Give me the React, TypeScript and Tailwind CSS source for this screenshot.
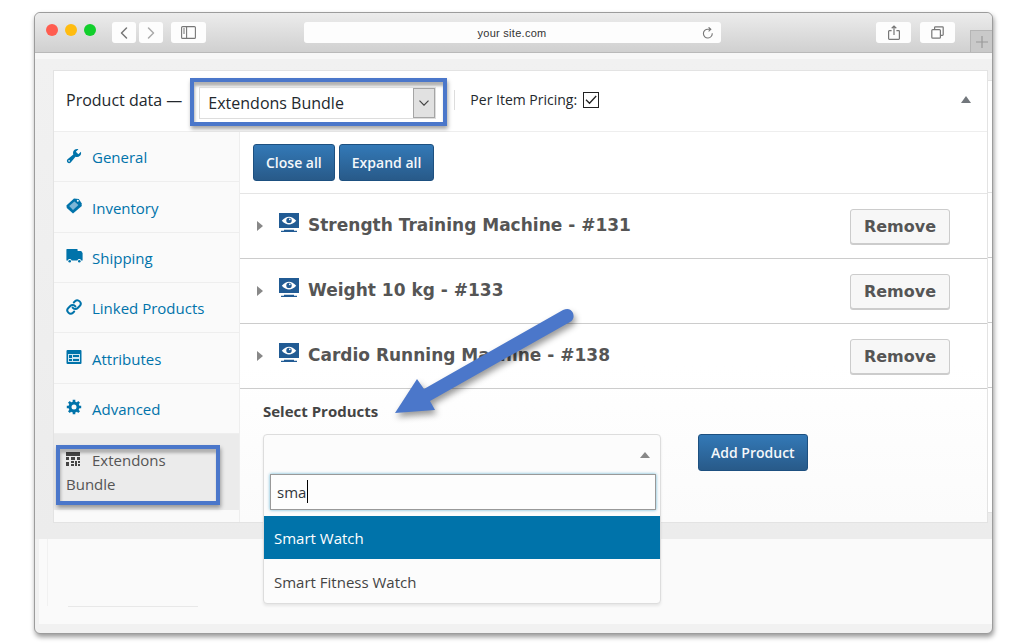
import type { ReactNode } from 'react';
import { ChevronLeft, ChevronRight, Link } from 'lucide-react';

const WrenchIcon = () => (
  <svg viewBox="1 1 18 18" className="w-4 h-4" fill="currentColor">
    <path d="M16.68 9.77c-1.34 1.34-3.3 1.67-4.95.99l-5.41 6.52c-.99.99-2.59.99-3.58 0s-.99-2.59 0-3.57l6.52-5.42c-.68-1.65-.35-3.61.99-4.95 1.28-1.28 3.12-1.62 4.72-1.06l-2.89 2.89 2.82 2.82 2.86-2.87c.53 1.58.18 3.39-1.08 4.65z" />
    <circle cx="4.500" cy="15.500" r=".9" fill="#fafafa" />
  </svg>
);

const TagIcon = () => (
  <svg viewBox="0 0 16 16" className="w-4 h-4" fill="currentColor">
    <path d="M.4 7.600 8 .6l4.800.4 2.800 4.200L15.800 8 7 15.600.8 10z" />
    <path d="M3.200 8 8.400 3.400l4 3.600-5.400 5z" fill="#7db6d6" />
    <circle cx="11.800" cy="2.800" r="1" fill="#fafafa" />
  </svg>
);

const TruckIcon = () => (
  <svg viewBox="0 0 17 14" className="w-[17px] h-[14px]" fill="currentColor">
    <path d="M1 0h10q.6 0 .6.6V2h3.600l1.400 2v7.400h-1.400a2 2 0 0 0-3.800 0H5.600a2 2 0 0 0-3.800 0H.4V.6Q.4 0 1 0z" />
    <circle cx="3.700" cy="12.200" r="1.300" />
    <circle cx="13.300" cy="12.200" r="1.300" />
  </svg>
);

const CardIcon = () => (
  <svg viewBox="0 0 16 14" className="w-4 h-[14px]" fill="currentColor">
    <rect x=".5" y="0" width="15" height="14" rx="1" />
    <path d="M2 4h12v8H2z" fill="#cfe5f1" />
    <path d="M3 5h3v3H3zM7 5h6v2H7zM3 9h3v2H3zM7 9h6v2H7z" />
  </svg>
);

const GearIcon = () => (
  <svg viewBox="0 0 16 16" className="w-4 h-4" fill="none" stroke="currentColor">
    <circle cx="8" cy="8" r="4" strokeWidth="3" />
    <path d="M8 .8v2.400M8 12.800v2.400M.8 8h2.400M12.800 8h2.400M2.900 2.900l1.700 1.700M11.400 11.400l1.700 1.700M13.100 2.900l-1.700 1.700M4.600 11.400l-1.700 1.700" strokeWidth="2.600" />
  </svg>
);

const LayoutIcon = () => (
  <svg viewBox="0 0 14 14" className="w-[14px] h-[14px]" fill="currentColor">
    <path d="M0 0h14v4H0zM0 5h3v3H0zM5 5h4v3H5zM11 5h3v3h-3zM0 10h3v4H0zM5 9h3v2H5zM5 12h3v2H5zM9 9h2v5H9zM12 9h2v2h-2zM12 12h2v2h-2z" />
  </svg>
);

const ScreenIcon = () => (
  <svg viewBox="0 0 20 19" className="w-5 h-[19px] text-[#215b94]" fill="currentColor">
    <path d="M0 0h20v15H0z" />
    <path d="M5 16.800h10v.9h3v1.300H2v-1.300h3z" />
    <path d="M2.800 7.800Q10-.4 17.200 7.800 10 15.400 2.800 7.800z" fill="#fff" />
    <circle cx="10" cy="7.400" r="2.700" />
    <circle cx="10.800" cy="6.400" r=".8" fill="#fff" />
  </svg>
);

const tabs = [
  { name: 'General', icon: <WrenchIcon /> },
  { name: 'Inventory', icon: <TagIcon /> },
  { name: 'Shipping', icon: <TruckIcon /> },
  { name: 'Linked Products', icon: <Link className="w-4 h-4" strokeWidth={3} /> },
  { name: 'Attributes', icon: <CardIcon /> },
  { name: 'Advanced', icon: <GearIcon /> },
];

const products = ['Strength Training Machine - #131', 'Weight 10 kg - #133', 'Cardio Running Machine - #138'];

function ChromeButton({ label, className, children }: { label: string; className: string; children: ReactNode }) {
  return (
    <button aria-label={label} className={`h-[21px] rounded-[3px] bg-[#fdfdfd] flex items-center justify-center text-[#777] ${className}`}>
      {children}
    </button>
  );
}

function BlueButton({ children }: { children: ReactNode }) {
  return (
    <button className="h-[37px] px-3 rounded-[3px] border border-[#1d5080] bg-linear-to-b from-[#3379b7] to-[#285a89] text-sm font-semibold text-[#f4f7fa]">
      {children}
    </button>
  );
}

function TitleBar() {
  return (
    <div className="h-10 flex border-b border-[#b9b9b9] bg-linear-to-b from-[#ececec] to-[#d0d0d0] rounded-t-md">
      <div className="flex-1 flex pt-[9px] pl-[11px]">
        <div className="flex gap-[7px] pt-[2px]">
          <span className="w-3 h-3 rounded-full bg-[#ff5d50]"></span>
          <span className="w-3 h-3 rounded-full bg-[#ffbc10]"></span>
          <span className="w-3 h-3 rounded-full bg-[#12cf2c]"></span>
        </div>
        <div className="flex ml-4 gap-[3px]">
          <ChromeButton label="Back" className="w-6"><ChevronLeft className="w-5 h-5" strokeWidth={1.8} /></ChromeButton>
          <ChromeButton label="Forward" className="w-6"><ChevronRight className="w-5 h-5 text-[#aaa]" strokeWidth={1.8} /></ChromeButton>
        </div>
        <ChromeButton label="Sidebar" className="w-[35px] ml-2">
          <svg viewBox="0 0 15 13" className="w-[15px] h-[13px]" fill="none" stroke="currentColor" strokeWidth="1.1">
            <rect x=".6" y=".6" width="13.8" height="11.8" rx="1" />
            <path d="M5.600.6v11.800M2 3h2M2 5h2M2 7h2" />
          </svg>
        </ChromeButton>
      </div>
      <div className="relative w-[417px] h-[21px] mt-[9px]">
        <input aria-label="Address" readOnly value="your site.com" className="block w-full h-[21px] rounded-[3px] bg-[#fdfdfd] text-center text-[11px] tracking-wide text-[#333] font-['Liberation_Sans']" />
        <svg viewBox="0 0 12 12" className="absolute right-[7px] top-[5px] w-3 h-3" fill="none" stroke="#777" strokeWidth="1.1">
          <path d="M10.200 6.200A4.400 4.400 0 1 1 6 2.200h2.400M6.600.3l2.200 2-2.200 2" />
        </svg>
      </div>
      <div className="flex-1 flex justify-end pl-[14px]">
        <div className="flex gap-[9px] pt-[9px] mr-[15px]">
          <ChromeButton label="Share" className="w-[35px]">
            <svg viewBox="0 0 12 16" className="w-3 h-4" fill="none" stroke="currentColor" strokeWidth="1.2">
              <path d="M3.600 5.600H1.400q-.8 0-.8.8v7.200q0 .8.8.8h9.200q.8 0 .8-.8V6.400q0-.8-.8-.8H8.400M6 10V1M3.700 3.200 6 1l2.300 2.200" />
            </svg>
          </ChromeButton>
          <ChromeButton label="Windows" className="w-[35px]">
            <svg viewBox="0 0 13 13" className="w-[13px] h-[13px]" fill="none" stroke="currentColor" strokeWidth="1.2">
              <rect x=".8" y="3.600" width="8.600" height="8.600" rx="1" />
              <path d="M3.600 3.400V1.600q0-.8.8-.8h7q.8 0 .8.8v7q0 .8-.8.8H9.600" />
            </svg>
          </ChromeButton>
        </div>
        <button aria-label="New tab" className="self-end w-[22px] h-[22px] border-l border-t border-[#b5b5b5] bg-[#c9c9c9] flex items-center justify-center">
          <svg viewBox="0 0 12 12" className="w-3 h-3" stroke="#999" strokeWidth="1.2"><path d="M6 0v12M0 6h12" /></svg>
        </button>
      </div>
    </div>
  );
}

function PanelHeader() {
  return (
    <div className="h-[61px] flex items-start pt-[7px] border-b border-[#eee] text-[#23282d]">
      <span className="pl-3 pt-[10px] text-base font-medium leading-6 whitespace-nowrap">Product data —</span>
      <div className="w-[257px] h-12 ml-2 p-[5px] border-4 border-[#4b77ca] shadow-[1px_3px_4px_rgba(0,0,0,0.35),inset_1px_4px_3px_rgba(0,0,0,0.3)]">
        <div className="relative h-8 mr-[2px] border border-[#ddd]">
          <select aria-label="Product type" className="block w-full h-[30px] pl-2 appearance-none text-base font-medium bg-transparent">
            <option>Extendons Bundle</option>
          </select>
          <span className="absolute right-0 top-0 w-[22px] h-[30px] border border-[#a5a5a5] bg-[#e1e1e1] flex items-center justify-center pointer-events-none">
            <svg viewBox="0 0 10 6" className="w-[10px] h-[6px]" fill="none" stroke="#444" strokeWidth="1.2"><path d="M.5.7 5 5.200 9.500.7" /></svg>
          </span>
        </div>
      </div>
      <label className="flex items-center gap-[6px] ml-[7px] mt-3 h-5 pl-[15px] border-l border-[#ddd] text-sm font-medium whitespace-nowrap">
        Per Item Pricing:
        <span className="relative w-4 h-4">
          <input type="checkbox" defaultChecked className="block w-4 h-4 appearance-none border border-[#222]" />
          <svg viewBox="0 0 16 16" className="absolute inset-0 pointer-events-none" fill="none" stroke="#222" strokeWidth="1.3"><path d="M3 7.800 6.500 11.200 13.200 4" /></svg>
        </span>
      </label>
      <button aria-label="Toggle panel" className="ml-auto mr-4 mt-[18px]">
        <svg viewBox="0 0 10 7" className="w-[10px] h-[7px]" fill="#72777c"><path d="M5 0l5 7H0z" /></svg>
      </button>
    </div>
  );
}

function Sidebar() {
  return (
    <nav className="w-[186px] shrink-0 border-r border-[#eee] bg-[#fafafa] text-[15px]">
      <div className="grid grid-rows-6 h-[302px] text-[#0073aa]">
        {tabs.map((tab) => (
          <a key={tab.name} href="#" className="flex items-center pl-3 pt-[2px] border-b border-[#eee]">
            <span className="w-[26px] pb-1">{tab.icon}</span>
            {tab.name}
          </a>
        ))}
      </div>
      <a href="#" className="relative block h-[76px] pl-3 pt-[14px] bg-[#ebebeb] text-[#555] leading-6">
        <span className="inline-block w-[26px] text-[#444]"><LayoutIcon /></span>Extendons<br />Bundle
        <span className="absolute left-[2px] top-[11px] w-[164px] h-[60px] border-4 border-[#4b77ca] shadow-[1px_3px_4px_rgba(0,0,0,0.35),inset_1px_4px_3px_rgba(0,0,0,0.25)]"></span>
      </a>
    </nav>
  );
}

function ProductSearch() {
  return (
    <div className="relative w-[398px] h-[37px]">
      <div className="absolute inset-x-0 top-0 h-[170px] rounded border border-[#ddd] bg-[#fcfcfc] shadow-[0_2px_3px_rgba(0,0,0,0.08)]">
        <div className="h-[39px] flex items-center justify-end pr-[10px]">
          <svg viewBox="0 0 10 6" className="w-[10px] h-[6px]" fill="#888"><path d="M5 0l5 6H0z" /></svg>
        </div>
        <div className="relative mx-[6px] mr-1">
          <input aria-label="Search products" defaultValue="sma" className="block w-full h-9 pl-[6px] border border-[#999] bg-[#fdfdfd] text-[15px] text-[#32373c] shadow-[0_0_3px_rgba(0,133,186,0.6)] outline-none" />
          <span className="absolute left-[37px] top-[6px] w-px h-[23px] bg-black"></span>
        </div>
        <ul role="listbox" aria-label="Products" className="mt-[6px] text-[15px]">
          <li role="option" aria-selected="true" className="h-[43px] pl-[10px] pt-[2px] flex items-center bg-[#0073aa] text-white">Smart Watch</li>
          <li role="option" aria-selected="false" className="h-[45px] pl-[10px] pt-[2px] flex items-center text-[#444]">Smart Fitness Watch</li>
        </ul>
      </div>
    </div>
  );
}

export default function App() {
  return (
    <div className="min-h-screen bg-white pt-3 pl-[34px] pr-[31px] pb-2 font-['Open_Sans','Noto_Sans',sans-serif]">
      <div className="relative rounded-md border border-[#9c9c9c] bg-[#f1f1f1] shadow-[1px_3px_5px_rgba(0,0,0,0.4)]">
        <TitleBar />
        <div className="h-[6px] bg-[#f7f7f7]"></div>
        <div className="flex pt-[11px] pb-4 pl-[18px] bg-linear-to-b from-[#f1f1f1] to-[#ececec]">
          <main className="flex-1 border border-[#e3e3e3] bg-white">
            <PanelHeader />
            <div className="flex">
              <Sidebar />
              <div className="flex-1 pb-3 bg-linear-to-b from-white from-60% to-[#fbfbfb]">
                <div className="h-[62px] flex gap-1 pl-[13px] pt-3 border-b border-[#e5e5e5]">
                  <BlueButton>Close all</BlueButton>
                  <BlueButton>Expand all</BlueButton>
                </div>
                {products.map((product) => (
                  <div key={product} className="h-[65px] flex items-center pl-[17px] pr-[37px] border-b border-[#ccc] font-['DejaVu_Sans'] font-bold text-[#555]">
                    <svg viewBox="0 0 6 10" className="w-[6px] h-[10px]" fill="#888"><path d="M0 0l6 5-6 5z" /></svg>
                    <span className="ml-4 mb-2"><ScreenIcon /></span>
                    <h3 className="flex-1 ml-[9px] text-[17px]">{product}</h3>
                    <button className="w-[100px] h-[35px] pt-px rounded-[3px] border border-[#ccc] bg-[#f7f7f7] shadow-[0_1px_0_#ccc] text-base">Remove</button>
                  </div>
                ))}
                <div className="h-[121px] pl-[23px] pt-[10px]">
                  <h4 className="text-[15px] leading-6 font-bold text-[#444]">Select Products</h4>
                  <div className="flex gap-[37px] mt-[11px]">
                    <ProductSearch />
                    <BlueButton>Add Product</BlueButton>
                  </div>
                </div>
              </div>
            </div>
          </main>
          <div className="w-1 my-[10px] border-y border-[#e3e3e3] bg-white">
            <div className="h-[112px] border-b border-[#e3e3e3]"></div>
            <div className="h-[65px] border-b border-[#ccc]"></div>
            <div className="h-[65px] border-b border-[#ccc]"></div>
            <div className="h-[65px] border-b border-[#ccc]"></div>
          </div>
        </div>
        <div className="ml-1 h-[85px] bg-[#fafafa]">
          <div className="w-[9px] h-[67px] border-r border-[#f1f1f1]"></div>
          <div className="w-[130px] ml-[29px] border-t border-[#e8e8e8]"></div>
        </div>
        <div className="h-[9px]"></div>

        {/* pointer to the product search */}
        <svg viewBox="0 0 190 115" className="absolute left-[355px] top-[292px] w-[190px] h-[115px] pointer-events-none drop-shadow-[2px_4px_3px_rgba(0,0,0,0.4)]" fill="#4b77ca">
          <path d="M5 108 27 74 34 84 173 5Q180 2 183 8 185 14 180 17L40 96 45 105z" />
        </svg>
      </div>
    </div>
  );
}
